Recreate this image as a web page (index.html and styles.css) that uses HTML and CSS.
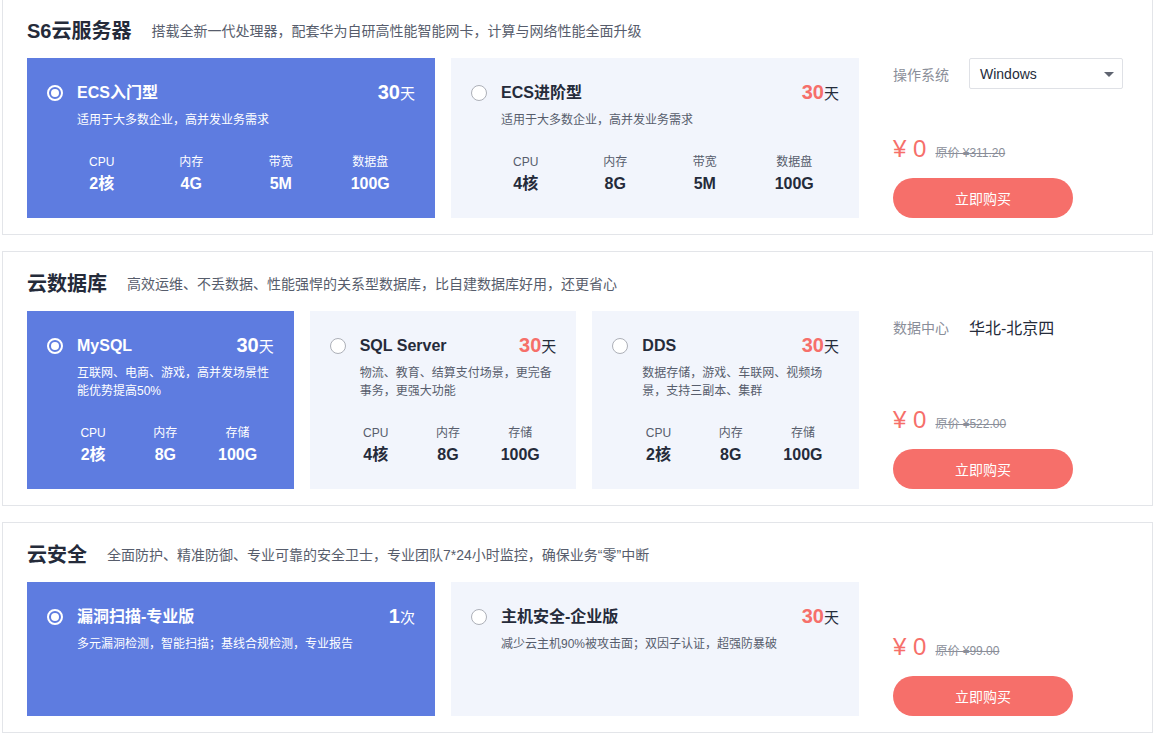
FILE: index.html
```html
<!DOCTYPE html>
<html lang="zh-CN">
<head>
<meta charset="utf-8">
<title>云产品</title>
<link rel="stylesheet" href="styles.css">
</head>
<body>
<div class="page">

  <section class="section">
    <div class="head">
      <h2 class="head-title">S6云服务器</h2>
      <p class="head-desc">搭载全新一代处理器，配套华为自研高性能智能网卡，计算与网络性能全面升级</p>
    </div>
    <div class="row">
      <div class="cards">
        <div class="card active">
          <div class="card-top">
            <span class="radio"></span>
            <span class="name">ECS入门型</span>
            <span class="term"><b>30</b>天</span>
          </div>
          <p class="desc">适用于大多数企业，高并发业务需求</p>
          <div class="specs four">
            <div class="spec"><div class="spec-k">CPU</div><div class="spec-v">2核</div></div>
            <div class="spec"><div class="spec-k">内存</div><div class="spec-v">4G</div></div>
            <div class="spec"><div class="spec-k">带宽</div><div class="spec-v">5M</div></div>
            <div class="spec"><div class="spec-k">数据盘</div><div class="spec-v">100G</div></div>
          </div>
        </div>
        <div class="card">
          <div class="card-top">
            <span class="radio"></span>
            <span class="name">ECS进阶型</span>
            <span class="term"><b>30</b>天</span>
          </div>
          <p class="desc">适用于大多数企业，高并发业务需求</p>
          <div class="specs four">
            <div class="spec"><div class="spec-k">CPU</div><div class="spec-v">4核</div></div>
            <div class="spec"><div class="spec-k">内存</div><div class="spec-v">8G</div></div>
            <div class="spec"><div class="spec-k">带宽</div><div class="spec-v">5M</div></div>
            <div class="spec"><div class="spec-k">数据盘</div><div class="spec-v">100G</div></div>
          </div>
        </div>
      </div>
      <div class="panel">
        <div class="opt">
          <span class="opt-k">操作系统</span>
          <div class="select">Windows<span class="caret"></span></div>
        </div>
        <div class="buy">
          <div class="price"><span class="now">¥ 0</span><span class="old">原价 ¥311.20</span></div>
          <button class="btn">立即购买</button>
        </div>
      </div>
    </div>
  </section>

  <section class="section">
    <div class="head">
      <h2 class="head-title">云数据库</h2>
      <p class="head-desc">高效运维、不丢数据、性能强悍的关系型数据库，比自建数据库好用，还更省心</p>
    </div>
    <div class="row">
      <div class="cards">
        <div class="card active">
          <div class="card-top">
            <span class="radio"></span>
            <span class="name">MySQL</span>
            <span class="term"><b>30</b>天</span>
          </div>
          <p class="desc">互联网、电商、游戏，高并发场景性能优势提高50%</p>
          <div class="specs three">
            <div class="spec"><div class="spec-k">CPU</div><div class="spec-v">2核</div></div>
            <div class="spec"><div class="spec-k">内存</div><div class="spec-v">8G</div></div>
            <div class="spec"><div class="spec-k">存储</div><div class="spec-v">100G</div></div>
          </div>
        </div>
        <div class="card">
          <div class="card-top">
            <span class="radio"></span>
            <span class="name">SQL Server</span>
            <span class="term"><b>30</b>天</span>
          </div>
          <p class="desc">物流、教育、结算支付场景，更完备事务，更强大功能</p>
          <div class="specs three">
            <div class="spec"><div class="spec-k">CPU</div><div class="spec-v">4核</div></div>
            <div class="spec"><div class="spec-k">内存</div><div class="spec-v">8G</div></div>
            <div class="spec"><div class="spec-k">存储</div><div class="spec-v">100G</div></div>
          </div>
        </div>
        <div class="card">
          <div class="card-top">
            <span class="radio"></span>
            <span class="name">DDS</span>
            <span class="term"><b>30</b>天</span>
          </div>
          <p class="desc">数据存储，游戏、车联网、视频场景，支持三副本、集群</p>
          <div class="specs three">
            <div class="spec"><div class="spec-k">CPU</div><div class="spec-v">2核</div></div>
            <div class="spec"><div class="spec-k">内存</div><div class="spec-v">8G</div></div>
            <div class="spec"><div class="spec-k">存储</div><div class="spec-v">100G</div></div>
          </div>
        </div>
      </div>
      <div class="panel">
        <div class="opt">
          <span class="opt-k">数据中心</span>
          <span class="opt-v">华北-北京四</span>
        </div>
        <div class="buy">
          <div class="price"><span class="now">¥ 0</span><span class="old">原价 ¥522.00</span></div>
          <button class="btn">立即购买</button>
        </div>
      </div>
    </div>
  </section>

  <section class="section">
    <div class="head">
      <h2 class="head-title">云安全</h2>
      <p class="head-desc">全面防护、精准防御、专业可靠的安全卫士，专业团队7*24小时监控，确保业务“零”中断</p>
    </div>
    <div class="row short">
      <div class="cards">
        <div class="card active">
          <div class="card-top">
            <span class="radio"></span>
            <span class="name">漏洞扫描-专业版</span>
            <span class="term"><b>1</b>次</span>
          </div>
          <p class="desc">多元漏洞检测，智能扫描；基线合规检测，专业报告</p>
        </div>
        <div class="card">
          <div class="card-top">
            <span class="radio"></span>
            <span class="name">主机安全-企业版</span>
            <span class="term"><b>30</b>天</span>
          </div>
          <p class="desc">减少云主机90%被攻击面；双因子认证，超强防暴破</p>
        </div>
      </div>
      <div class="panel">
        <div class="buy">
          <div class="price"><span class="now">¥ 0</span><span class="old">原价 ¥99.00</span></div>
          <button class="btn">立即购买</button>
        </div>
      </div>
    </div>
  </section>

</div>
</body>
</html>
```

FILE: styles.css
```css
* { box-sizing: border-box; }

html, body {
  margin: 0;
  padding: 0;
  background: #ffffff;
}

body {
  font-family: "Liberation Sans", "Noto Sans CJK SC", sans-serif;
  color: #252b3a;
}

.page {
  width: 1151px;
  margin: -2px 0 0 2px;
  display: flex;
  flex-direction: column;
  gap: 16px;
}

.section {
  border: 1px solid #e3e5e9;
  padding: 0 24px 16px;
}

.head {
  height: 59px;
  padding-top: 4px;
  display: flex;
  align-items: center;
}

.head-title {
  margin: 0 20px 0 0;
  font-size: 20px;
  line-height: 28px;
  font-weight: 700;
  color: #252b3a;
}

.head-desc {
  margin: 0;
  font-size: 14px;
  line-height: 20px;
  color: #575d6c;
}

.row {
  display: flex;
  align-items: stretch;
}

.row.short {
  min-height: 134px;
}

.cards {
  flex: 0 0 832px;
  display: flex;
  gap: 16px;
}

.card {
  flex: 1 1 0;
  min-width: 0;
  background: #f2f5fc;
  padding: 23px 20px 22px;
}

.card.active {
  background: #5e7ce0;
  color: #ffffff;
}

.card-top {
  display: flex;
  align-items: center;
  height: 24px;
}

.radio {
  flex: 0 0 16px;
  width: 16px;
  height: 16px;
  border-radius: 50%;
  border: 1px solid #adb0b8;
  background: #ffffff;
  margin-right: 14px;
  position: relative;
}

.card.active .radio {
  border: 2px solid #ffffff;
  background: transparent;
}

.card.active .radio::after {
  content: "";
  position: absolute;
  left: 2px;
  top: 2px;
  width: 8px;
  height: 8px;
  border-radius: 50%;
  background: #ffffff;
}

.name {
  font-size: 16px;
  line-height: 24px;
  font-weight: 700;
  flex: 1 1 auto;
}

.term {
  font-size: 15px;
  line-height: 24px;
  white-space: nowrap;
}

.term b {
  font-size: 20px;
  font-weight: 700;
  color: #f66f6a;
}

.card.active .term b {
  color: #ffffff;
}

.desc {
  margin: 6px 0 0 30px;
  font-size: 12px;
  line-height: 18px;
  color: #575d6c;
}

.card.active .desc {
  color: #ffffff;
}

.specs {
  display: grid;
  margin: 24px 0 0 10px;
  text-align: center;
}

.specs.four { grid-template-columns: repeat(4, 1fr); }
.specs.three { grid-template-columns: repeat(3, 1fr); }

.spec-k {
  font-size: 12px;
  line-height: 18px;
  color: #575d6c;
}

.spec-v {
  margin-top: 1px;
  font-size: 16px;
  line-height: 24px;
  font-weight: 700;
  color: #252b3a;
}

.card.active .spec-k,
.card.active .spec-v {
  color: #ffffff;
}

.panel {
  flex: 1 1 auto;
  margin-left: 34px;
  display: flex;
  flex-direction: column;
  justify-content: space-between;
}

.opt {
  display: flex;
  align-items: center;
  height: 31px;
}

.opt-k {
  font-size: 14px;
  color: #8a8e99;
  margin-right: 20px;
  white-space: nowrap;
}

.opt-v {
  font-size: 16px;
  color: #252b3a;
}

.select {
  position: relative;
  width: 154px;
  height: 31px;
  border: 1px solid #dfe1e6;
  border-radius: 2px;
  padding-left: 10px;
  font-size: 14px;
  line-height: 30px;
  color: #252b3a;
}

.caret {
  position: absolute;
  right: 8px;
  top: 13px;
  width: 0;
  height: 0;
  border-left: 5px solid transparent;
  border-right: 5px solid transparent;
  border-top: 5px solid #5f6470;
}

.buy {
  margin-top: auto;
}

.price {
  display: flex;
  align-items: baseline;
  height: 30px;
  line-height: 31px;
  margin-bottom: 15px;
}

.now {
  font-size: 24px;
  color: #f66f6a;
}

.old {
  margin-left: 9px;
  font-size: 12px;
  color: #8a8e99;
  text-decoration: line-through;
}

.btn {
  display: block;
  width: 180px;
  height: 40px;
  border: none;
  border-radius: 20px;
  background: #f66f6a;
  color: #ffffff;
  font-family: "Liberation Sans", "Noto Sans CJK SC", sans-serif;
  font-size: 14px;
  padding: 0;
  cursor: pointer;
}
```
